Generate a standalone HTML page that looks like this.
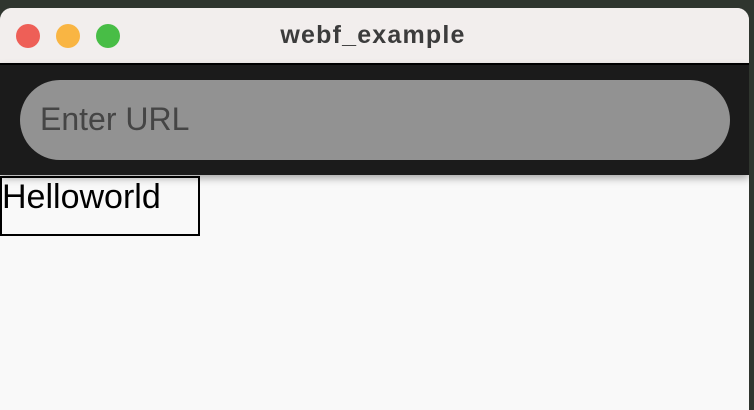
<!DOCTYPE html><html><head><style>
body{margin:0;width:754px;height:410px;background:#2f352e;position:relative;overflow:hidden;font-family:"Liberation Sans",sans-serif}
.win{position:absolute;left:0;top:8px;width:749px;height:402px;background:#f9f9f9;border-radius:12px 12px 0 0;overflow:hidden}
.tb{position:absolute;left:0;top:0;width:100%;height:55px;background:#f2eeed;border-bottom:2px solid #000}
.dot{position:absolute;top:16px;width:24px;height:24px;border-radius:50%}
.title{position:absolute;top:0;left:0;width:746px;text-align:center;line-height:55px;font-weight:bold;font-size:25px;letter-spacing:1.2px;color:#3c3c3c}
.bar{position:absolute;left:0;top:57px;width:100%;height:110px;background:#1b1b1b;box-shadow:0 3px 8px rgba(0,0,0,.35)}
.pill{position:absolute;left:20px;top:15px;width:710px;height:80px;border-radius:40px;background:#929292;color:#454545;font-size:32px;line-height:78px;box-sizing:border-box;padding-left:20px}
.box{position:absolute;left:0;top:168px;width:200px;height:60px;box-sizing:border-box;border:2px solid #000;font-size:34px;line-height:38px;padding-left:0;color:#000;white-space:nowrap}
</style></head><body><div class="win">
<div class="tb"><div class="dot" style="left:16px;background:#ee5f57"></div><div class="dot" style="left:56px;background:#f9b543"></div><div class="dot" style="left:96px;background:#48bd46"></div><div class="title">webf_example</div></div>
<div class="box">Helloworld</div>
<div class="bar"><div class="pill">Enter URL</div></div>
</div></body></html>
